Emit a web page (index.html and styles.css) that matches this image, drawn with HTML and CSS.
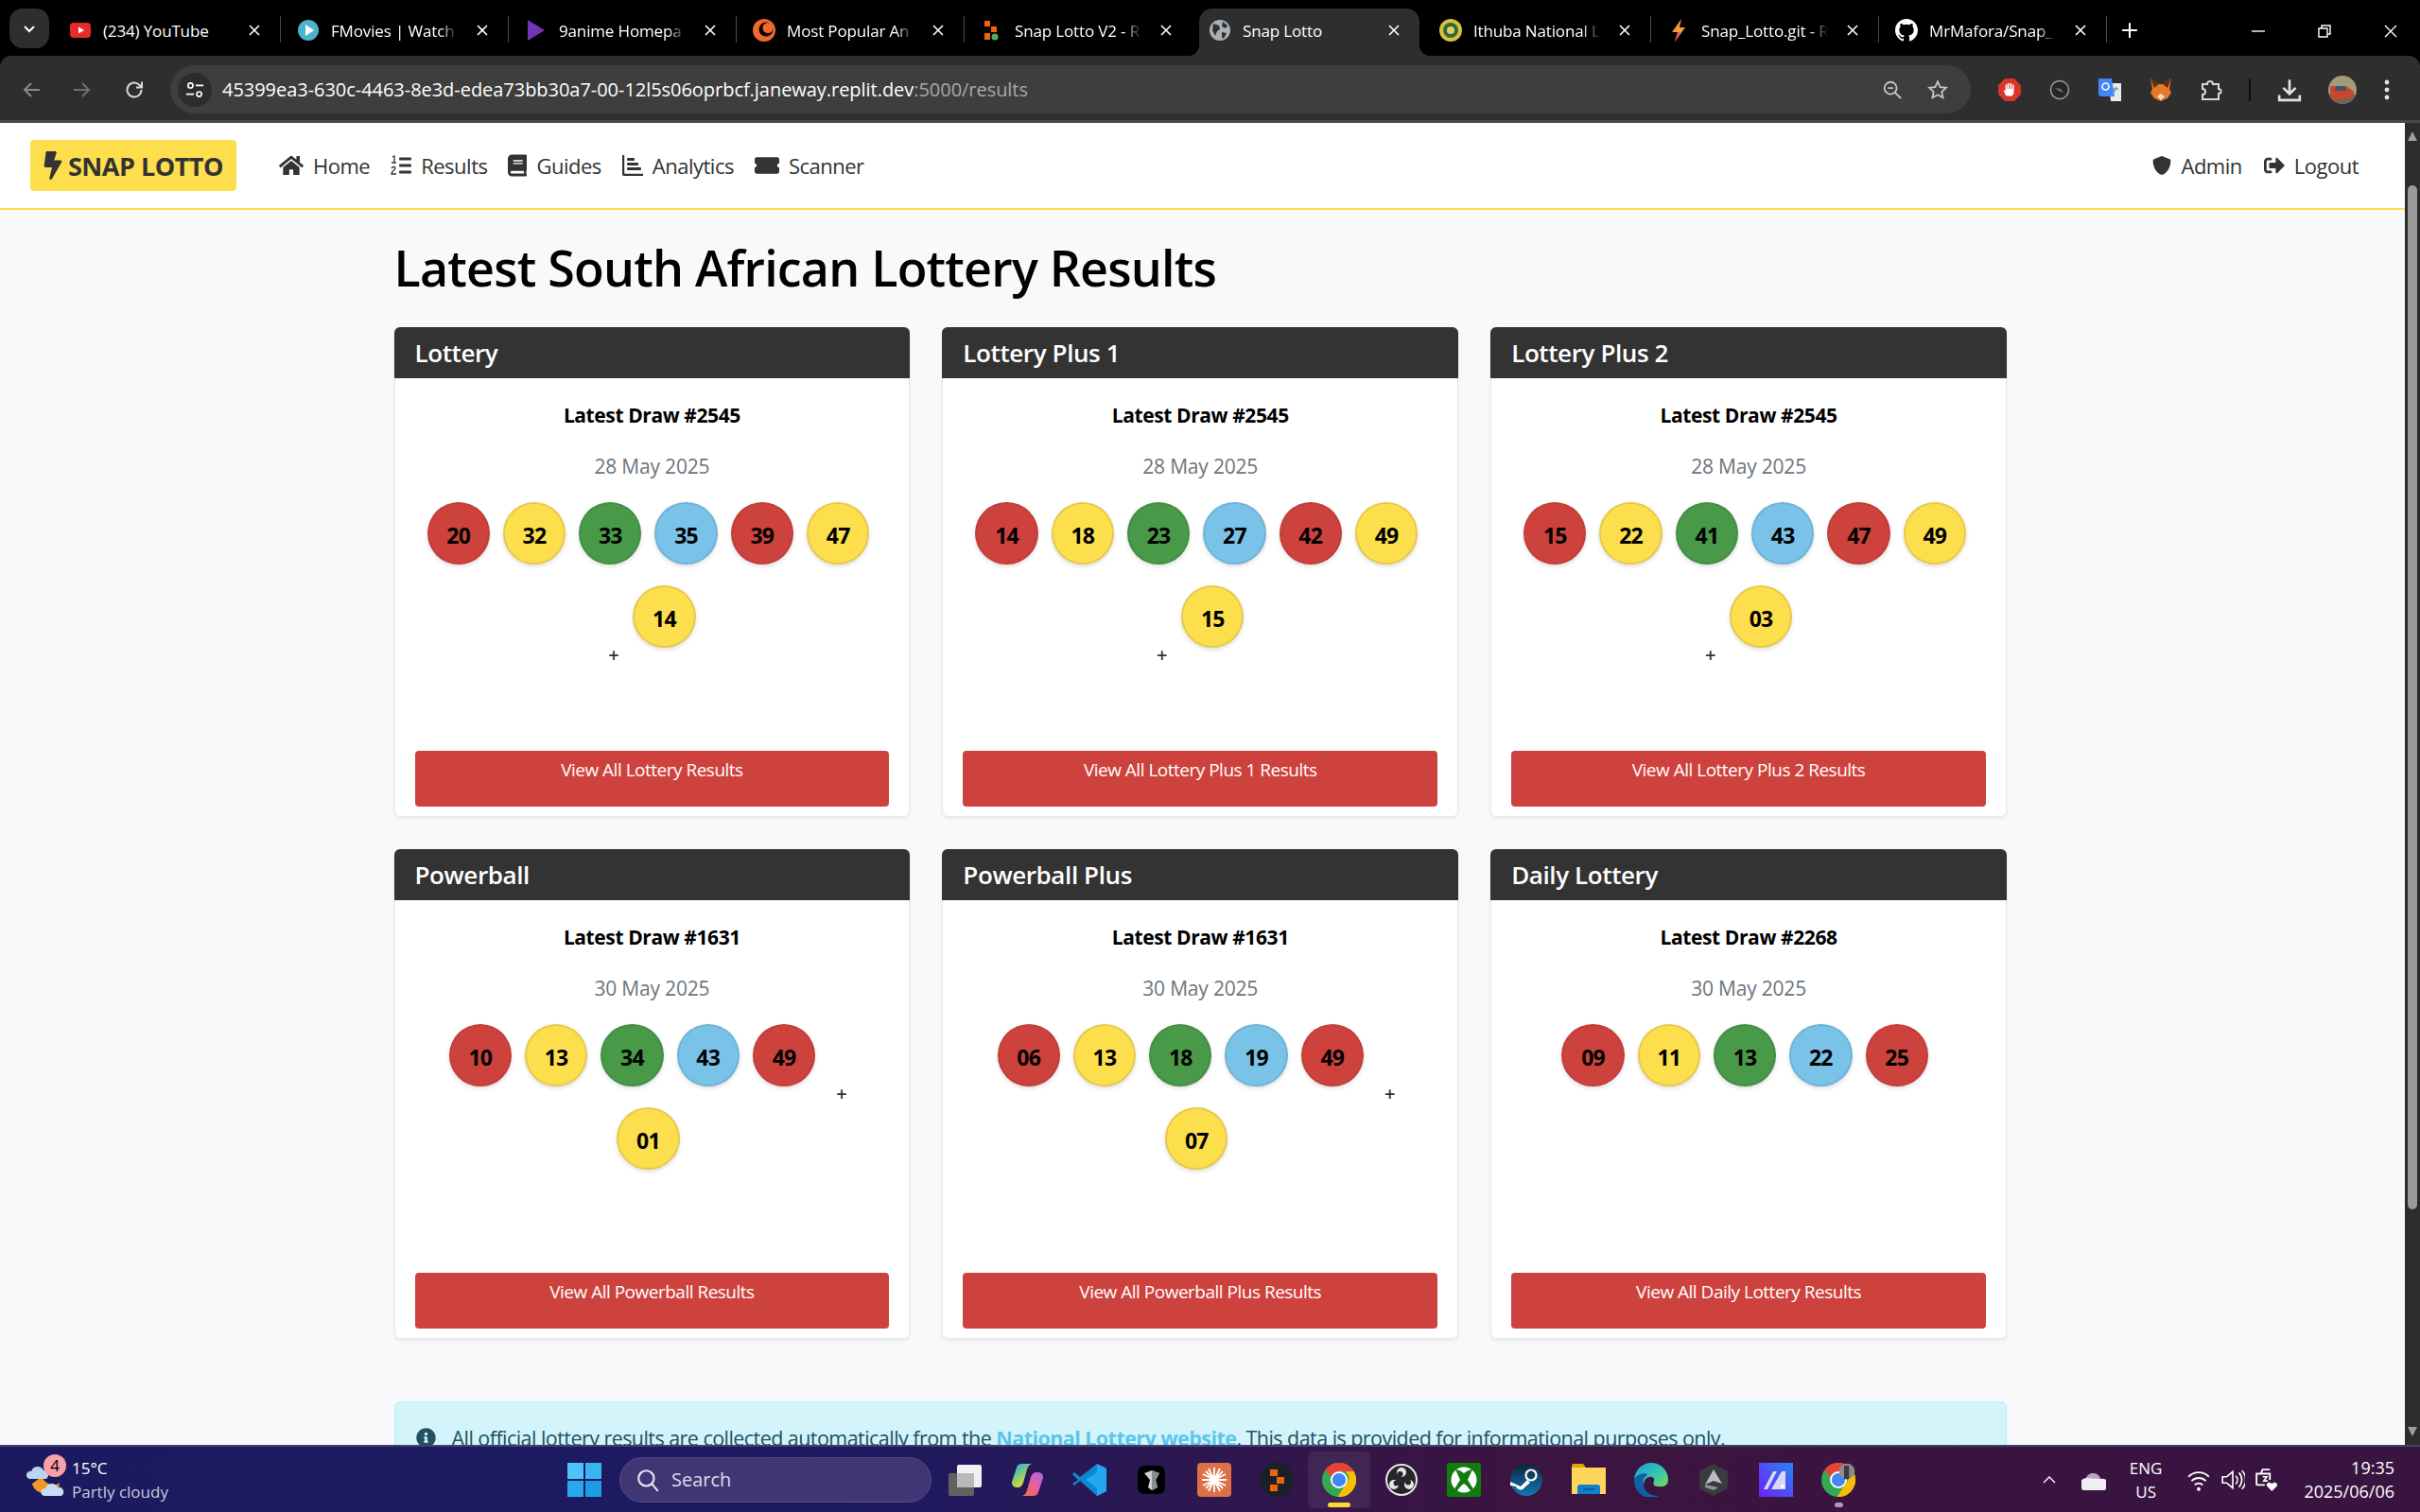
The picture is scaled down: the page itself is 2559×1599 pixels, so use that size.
FILE: index.html
```html
<!DOCTYPE html>
<html lang="en">
<head>
    <meta charset="UTF-8">
    <meta name="viewport" content="width=device-width, initial-scale=1.0">
    <title>Snap Lotto</title>
    <link rel="stylesheet" href="styles.css">
</head>
<body>

<svg class="defs" width="0" height="0">
    <symbol id="chrome" viewBox="0 0 48 48">
        <circle cx="24" cy="24" r="24" fill="#34a853"/>
        <path d="M24 0a24 24 0 0 1 20.800 12H24a12 12 0 0 0-11.200 8L4.600 9.800A24 24 0 0 1 24 0z" fill="#ea4335"/>
        <path d="M44.800 12A24 24 0 0 1 22 47.900L33 31a12 12 0 0 0 0-19z" fill="#fbbc04"/>
        <circle cx="24" cy="24" r="12" fill="#fff"/>
        <circle cx="24" cy="24" r="9.500" fill="#4285f4"/>
    </symbol>
    <symbol id="close" viewBox="0 0 16 16">
        <path d="M3 3l10 10M13 3L3 13" stroke="#fff" stroke-width="1.600" fill="none"/>
    </symbol>
</svg>

<div class="browser">
    <div class="tabstrip">
        <div class="tab-search"><svg viewBox="0 0 16 16" width="16" height="16"><path d="M3 6l5 5 5-5" stroke="#fff" stroke-width="2" fill="none"/></svg></div>
        <div class="tab sep">
            <svg class="favicon" viewBox="0 0 24 24"><rect x="1" y="4" width="22" height="16" rx="4" fill="#e62b2b"/><path d="M10 8.500l6 3.500-6 3.500z" fill="#fff"/></svg>
            <span class="tab-title">(234) YouTube</span>
            <svg class="tab-close"><use href="#close"/></svg>
        </div>
        <div class="tab sep">
            <svg class="favicon" viewBox="0 0 24 24"><circle cx="12" cy="12" r="11" fill="#4bb3cd"/><path d="M9 6l9 6-9 6z" fill="#fff"/></svg>
            <span class="tab-title fade">FMovies | Watch</span>
            <svg class="tab-close"><use href="#close"/></svg>
        </div>
        <div class="tab sep">
            <svg class="favicon" viewBox="0 0 24 24"><path d="M3 1l18 11L3 23z" fill="#7136b5"/></svg>
            <span class="tab-title fade">9anime Homepa</span>
            <svg class="tab-close"><use href="#close"/></svg>
        </div>
        <div class="tab sep">
            <svg class="favicon" viewBox="0 0 24 24"><circle cx="12" cy="12" r="12" fill="#f0682a"/><circle cx="14" cy="11" r="7.500" fill="#000"/><circle cx="16" cy="9.500" r="5.500" fill="#f0682a"/></svg>
            <span class="tab-title fade">Most Popular An</span>
            <svg class="tab-close"><use href="#close"/></svg>
        </div>
        <div class="tab">
            <svg class="favicon" viewBox="0 0 24 24"><rect x="4" y="2" width="6" height="6" fill="#f26207"/><rect x="11" y="8" width="6" height="6" fill="#f26207"/><rect x="4" y="15" width="6" height="7" fill="#f26207"/><circle cx="15" cy="19" r="3.500" fill="#57ab5a"/></svg>
            <span class="tab-title fade">Snap Lotto V2 - R</span>
            <svg class="tab-close"><use href="#close"/></svg>
        </div>
        <div class="tab active">
            <svg class="favicon" viewBox="0 0 24 24"><circle cx="12" cy="12" r="11" fill="#aab0b5"/><path d="M5 5l6 2 1 4-3 2-2 5-3-6zM15 3l5 4-2 3-4-2zM14 14l5 1-3 6-2-2z" fill="#2f2f2f"/></svg>
            <span class="tab-title">Snap Lotto</span>
            <svg class="tab-close"><use href="#close"/></svg>
        </div>
        <div class="tab sep">
            <svg class="favicon" viewBox="0 0 24 24"><circle cx="12" cy="12" r="12" fill="#d8c13c"/><circle cx="12" cy="12" r="8" fill="#2f6a3c"/><circle cx="12" cy="12" r="4" fill="#e3d25a"/></svg>
            <span class="tab-title fade">Ithuba National L</span>
            <svg class="tab-close"><use href="#close"/></svg>
        </div>
        <div class="tab sep">
            <svg class="favicon" viewBox="0 0 24 24"><path d="M15 0L5 14h6l-3 10 11-15h-6z" fill="#f59a3a"/><path d="M11 14l-3 10 7-9z" fill="#e8505b"/></svg>
            <span class="tab-title fade">Snap_Lotto.git - R</span>
            <svg class="tab-close"><use href="#close"/></svg>
        </div>
        <div class="tab sep">
            <svg class="favicon" viewBox="0 0 16 16"><path fill="#fff" d="M8 0C3.580 0 0 3.580 0 8c0 3.540 2.290 6.530 5.470 7.590.4.070.55-.17.55-.38v-1.340c-2.230.48-2.700-1.070-2.700-1.070-.36-.92-.89-1.170-.89-1.170-.73-.5.050-.49.050-.49.800.060 1.230.83 1.230.83.720 1.220 1.870.87 2.330.66.070-.52.280-.87.510-1.070-1.780-.2-3.640-.89-3.640-3.950 0-.87.310-1.590.82-2.150-.080-.2-.36-1.020.080-2.120 0 0 .67-.21 2.200.82a7.640 7.640 0 0 1 4 0c1.530-1.040 2.200-.82 2.200-.82.440 1.100.16 1.920.08 2.120.51.560.82 1.270.82 2.150 0 3.070-1.870 3.750-3.650 3.950.29.250.54.730.54 1.480v2.200c0 .210.15.46.55.38A8.010 8.010 0 0 0 16 8c0-4.420-3.580-8-8-8z"/></svg>
            <span class="tab-title fade">MrMafora/Snap_</span>
            <svg class="tab-close"><use href="#close"/></svg>
        </div>
        <div class="new-tab"><svg viewBox="0 0 16 16" width="18" height="18"><path d="M8 1v14M1 8h14" stroke="#fff" stroke-width="1.800"/></svg></div>
        <div class="window-btns">
            <svg viewBox="0 0 16 16" width="16" height="16"><path d="M1 8h14" stroke="#fff" stroke-width="1.400"/></svg>
            <svg viewBox="0 0 16 16" width="16" height="16"><path d="M2 5h9v9H2zM5 5V2h9v9h-3" stroke="#fff" stroke-width="1.400" fill="none"/></svg>
            <svg viewBox="0 0 16 16" width="16" height="16"><path d="M2 2l12 12M14 2L2 14" stroke="#fff" stroke-width="1.400"/></svg>
        </div>
    </div>

    <div class="toolbar">
        <svg class="tool tool-back" viewBox="0 0 24 24"><path d="M20 12H5M11 5l-7 7 7 7" stroke="#8a8a8a" stroke-width="2" fill="none"/></svg>
        <svg class="tool tool-forward" viewBox="0 0 24 24"><path d="M4 12h15M13 5l7 7-7 7" stroke="#6f6f6f" stroke-width="2" fill="none"/></svg>
        <svg class="tool tool-reload" viewBox="0 0 24 24"><path d="M19.500 12a7.500 7.500 0 1 1-2.200-5.300L20 9.500M20 3.500v6h-6" stroke="#d8d8d8" stroke-width="2" fill="none"/></svg>
        <div class="omnibox">
            <div class="site-info"><svg viewBox="0 0 24 24" width="22" height="22"><circle cx="7" cy="7" r="2.800" stroke="#fff" stroke-width="1.800" fill="none"/><path d="M13 7h9M2 17h9" stroke="#fff" stroke-width="1.800"/><circle cx="17" cy="17" r="2.800" stroke="#fff" stroke-width="1.800" fill="none"/></svg></div>
            <span class="url">45399ea3-630c-4463-8e3d-edea73bb30a7-00-12l5s06oprbcf.janeway.replit.dev<span class="url-dim">:5000/results</span></span>
            <svg class="omni-icon" viewBox="0 0 24 24"><circle cx="10" cy="10" r="7" stroke="#c4c7c5" stroke-width="2" fill="none"/><path d="M15 15l7 7M7 10h6" stroke="#c4c7c5" stroke-width="2"/></svg>
            <svg class="omni-icon" viewBox="0 0 24 24"><path d="M12 2.500l2.900 6.300 6.800.8-5 4.700 1.300 6.800-6-3.400-6 3.400 1.300-6.800-5-4.700 6.800-.8z" stroke="#c4c7c5" stroke-width="2" fill="none"/></svg>
        </div>
        <div class="extensions">
            <svg viewBox="0 0 24 24" width="26" height="26"><path d="M7.500 1h9L23 7.500v9L16.500 23h-9L1 16.500v-9z" fill="#d9362b"/><path d="M8 17l-2-5 2 1V7h1.500v4H10V5.500h1.500V11h1V5.500H14V11h.8V7h1.400v8l-1.700 3H9.500z" fill="#fff"/></svg>
            <svg viewBox="0 0 24 24" width="24" height="24"><circle cx="12" cy="12" r="9.500" stroke="#9a9a9a" stroke-width="1.500" fill="#262626"/><path d="M7 10l6 1 3 4-5-2z" fill="#777"/></svg>
            <svg viewBox="0 0 26 26" width="26" height="26"><path d="M12 6h13v19H14z" fill="#e8eaed"/><path d="M1 1h14l3 19H4a3 3 0 0 1-3-3z" fill="#4285f4"/><path d="M20 10l-4 8M16 12h6" stroke="#7a9aa8" stroke-width="1.500"/><circle cx="8.500" cy="9.500" r="3.500" stroke="#fff" stroke-width="1.600" fill="none"/></svg>
            <svg viewBox="0 0 26 26" width="26" height="26"><path d="M2 1l9 6h4l9-6-2 11 2 4-4 6-7 3-7-3-4-6 2-4z" fill="#e8772a"/><path d="M2 1l9 6-5 4zM24 1l-9 6 5 4z" fill="#5d2f12"/><path d="M9 20l4 4 4-4-4-3z" fill="#f5e1d0"/></svg>
            <svg viewBox="0 0 24 24" width="24" height="24"><path d="M3 6h5a3 3 0 0 1 6 0h6v5a2.500 2.500 0 0 1 0 5v6H3v-5a3 3 0 0 0 0-6z" stroke="#d8d8d8" stroke-width="2" fill="none"/></svg>
            <span class="ext-divider"></span>
            <svg viewBox="0 0 24 24" width="26" height="26"><path d="M12 2v13M6 10l6 6 6-6M2 17v5h20v-5" stroke="#e3e3e3" stroke-width="2.400" fill="none"/></svg>
            <svg viewBox="0 0 30 30" width="30" height="30"><defs><clipPath id="avatar"><circle cx="15" cy="15" r="15"/></clipPath></defs><g clip-path="url(#avatar)"><rect width="30" height="30" fill="#a39c78"/><rect y="20" width="30" height="10" fill="#6f6258"/><path d="M2 11h17l8 6v6l-20 3-5-5z" fill="#c9472c"/><path d="M8 11h9l3 5H7z" fill="#44536a"/></g></svg>
            <svg viewBox="0 0 8 24" width="8" height="24"><circle cx="4" cy="4" r="2.400" fill="#e3e3e3"/><circle cx="4" cy="12" r="2.400" fill="#e3e3e3"/><circle cx="4" cy="20" r="2.400" fill="#e3e3e3"/></svg>
        </div>
    </div>
</div>

<div class="viewport">
    <div class="page">
        <nav class="navbar">
            <a class="brand">
                <svg class="brand-bolt" viewBox="0 0 320 512"><path d="M296 160H180.600l42.600-129.800C227.200 15 215.700 0 200 0H56C44 0 33.800 8.900 32.200 20.800l-32 240C-1.700 275.200 9.500 288 24 288h118.700L96.600 482.500c-3.600 15.200 8 29.500 23.300 29.500 8.400 0 16.400-4.400 20.800-12l176-304c9.300-15.900-2.200-36-20.700-36z"/></svg>
                SNAP LOTTO
            </a>
            <ul class="nav-links">
                <li><svg class="nav-icon" viewBox="0 0 576 512"><path d="M280.370 148.260L96 300.110V464a16 16 0 0 0 16 16l112.060-.29a16 16 0 0 0 15.920-16V368a16 16 0 0 1 16-16h64a16 16 0 0 1 16 16v95.640a16 16 0 0 0 16 16.050L464 480a16 16 0 0 0 16-16V300L295.670 148.260a12.190 12.190 0 0 0-15.300 0zM571.600 251.470L488 182.560V44.050a12 12 0 0 0-12-12h-56a12 12 0 0 0-12 12v72.610L318.470 43a48 48 0 0 0-61 0L4.340 251.470a12 12 0 0 0-1.600 16.900l25.500 31A12 12 0 0 0 45.150 301l235.220-193.740a12.190 12.190 0 0 1 15.300 0L530.900 301a12 12 0 0 0 16.900-1.600l25.500-31a12 12 0 0 0-1.700-16.930z"/></svg>Home</li>
                <li><svg class="nav-icon icon-list" viewBox="0 0 22 22"><path d="M2 2l2-1v7M1 8h5" stroke="#333" stroke-width="1.300" fill="none"/><path d="M1 14c1-2 4-2 4 0 0 1.500-4 3-4 6h5" stroke="#333" stroke-width="1.300" fill="none"/><rect x="9" y="2.500" width="13" height="3" rx="1"/><rect x="9" y="9.500" width="13" height="3" rx="1"/><rect x="9" y="16.500" width="13" height="3" rx="1"/></svg>Results</li>
                <li><svg class="nav-icon icon-book" viewBox="0 0 448 512"><path d="M448 360V24c0-13.300-10.700-24-24-24H96C43 0 0 43 0 96v320c0 53 43 96 96 96h328c13.300 0 24-10.700 24-24v-16c0-7.500-3.500-14.300-8.900-18.700-4.200-15.400-4.200-59.300 0-74.700 5.400-4.300 8.900-11.100 8.900-18.600zM128 134c0-3.300 2.700-6 6-6h212c3.300 0 6 2.700 6 6v20c0 3.300-2.700 6-6 6H134c-3.300 0-6-2.700-6-6v-20zm0 64c0-3.300 2.700-6 6-6h212c3.300 0 6 2.700 6 6v20c0 3.300-2.700 6-6 6H134c-3.300 0-6-2.700-6-6v-20zm253.400 250H96c-17.700 0-32-14.300-32-32 0-17.600 14.400-32 32-32h285.400c-1.900 17.100-1.900 46.900 0 64z"/></svg>Guides</li>
                <li><svg class="nav-icon icon-list" viewBox="0 0 22 22"><path d="M1 0v19a2 2 0 0 0 2 2h19" stroke="#333" stroke-width="2.400" fill="none"/><rect x="5" y="3" width="8" height="3" rx="1"/><rect x="5" y="8" width="12" height="3" rx="1"/><rect x="5" y="13" width="15" height="3" rx="1"/></svg>Analytics</li>
                <li><svg class="nav-icon" viewBox="0 0 576 512"><path d="M528 256c0 26.510 21.490 48 48 48v96c0 26.510-21.490 48-48 48H48c-26.510 0-48-21.490-48-48v-96c26.510 0 48-21.490 48-48s-21.490-48-48-48v-96c0-26.510 21.490-48 48-48h480c26.510 0 48 21.490 48 48v96c-26.510 0-48 21.490-48 48z"/></svg>Scanner</li>
            </ul>
            <ul class="nav-links nav-right">
                <li><svg class="nav-icon icon-shield" viewBox="0 0 512 512"><path d="M466.500 83.700l-192-80a48.150 48.150 0 0 0-36.900 0l-192 80C27.700 91.100 16 108.600 16 128c0 198.500 114.500 335.700 221.500 380.300 11.800 4.900 25.100 4.900 36.900 0C360.100 472.600 496 349.300 496 128c0-19.400-11.700-36.900-29.500-44.300z"/></svg>Admin</li>
                <li><svg class="nav-icon icon-logout" viewBox="0 0 512 512"><path d="M497 273L329 441c-15 15-41 4.500-41-17v-96H152c-13.300 0-24-10.700-24-24v-96c0-13.300 10.700-24 24-24h136V88c0-21.400 25.900-32 41-17l168 168c9.300 9.400 9.300 24.600 0 34zM192 436v-40c0-6.600-5.400-12-12-12H96c-17.700 0-32-14.300-32-32V160c0-17.700 14.300-32 32-32h84c6.600 0 12-5.400 12-12V76c0-6.600-5.400-12-12-12H96c-53 0-96 43-96 96v192c0 53 43 96 96 96h84c6.600 0 12-5.400 12-12z"/></svg>Logout</li>
            </ul>
        </nav>

        <main class="container">
            <h1 class="page-title">Latest South African Lottery Results</h1>

            <div class="card-grid">
                <section class="card">
                    <h2 class="card-header">Lottery</h2>
                    <div class="card-body">
                        <h3 class="draw-title">Latest Draw #2545</h3>
                        <p class="draw-date">28 May 2025</p>
                        <div class="balls">
                            <span class="ball red">20</span><span class="ball yellow">32</span><span class="ball green">33</span><span class="ball blue">35</span><span class="ball red">39</span><span class="ball yellow">47</span>
                            <span class="plus">+</span><span class="ball yellow">14</span>
                        </div>
                        <a class="view-all">View All Lottery Results</a>
                    </div>
                </section>
                <section class="card">
                    <h2 class="card-header">Lottery Plus 1</h2>
                    <div class="card-body">
                        <h3 class="draw-title">Latest Draw #2545</h3>
                        <p class="draw-date">28 May 2025</p>
                        <div class="balls">
                            <span class="ball red">14</span><span class="ball yellow">18</span><span class="ball green">23</span><span class="ball blue">27</span><span class="ball red">42</span><span class="ball yellow">49</span>
                            <span class="plus">+</span><span class="ball yellow">15</span>
                        </div>
                        <a class="view-all">View All Lottery Plus 1 Results</a>
                    </div>
                </section>
                <section class="card">
                    <h2 class="card-header">Lottery Plus 2</h2>
                    <div class="card-body">
                        <h3 class="draw-title">Latest Draw #2545</h3>
                        <p class="draw-date">28 May 2025</p>
                        <div class="balls">
                            <span class="ball red">15</span><span class="ball yellow">22</span><span class="ball green">41</span><span class="ball blue">43</span><span class="ball red">47</span><span class="ball yellow">49</span>
                            <span class="plus">+</span><span class="ball yellow">03</span>
                        </div>
                        <a class="view-all">View All Lottery Plus 2 Results</a>
                    </div>
                </section>
                <section class="card">
                    <h2 class="card-header">Powerball</h2>
                    <div class="card-body">
                        <h3 class="draw-title">Latest Draw #1631</h3>
                        <p class="draw-date">30 May 2025</p>
                        <div class="balls">
                            <span class="ball red">10</span><span class="ball yellow">13</span><span class="ball green">34</span><span class="ball blue">43</span><span class="ball red">49</span>
                            <span class="plus">+</span><span class="ball yellow">01</span>
                        </div>
                        <a class="view-all">View All Powerball Results</a>
                    </div>
                </section>
                <section class="card">
                    <h2 class="card-header">Powerball Plus</h2>
                    <div class="card-body">
                        <h3 class="draw-title">Latest Draw #1631</h3>
                        <p class="draw-date">30 May 2025</p>
                        <div class="balls">
                            <span class="ball red">06</span><span class="ball yellow">13</span><span class="ball green">18</span><span class="ball blue">19</span><span class="ball red">49</span>
                            <span class="plus">+</span><span class="ball yellow">07</span>
                        </div>
                        <a class="view-all">View All Powerball Plus Results</a>
                    </div>
                </section>
                <section class="card">
                    <h2 class="card-header">Daily Lottery</h2>
                    <div class="card-body">
                        <h3 class="draw-title">Latest Draw #2268</h3>
                        <p class="draw-date">30 May 2025</p>
                        <div class="balls">
                            <span class="ball red">09</span><span class="ball yellow">11</span><span class="ball green">13</span><span class="ball blue">22</span><span class="ball red">25</span>
                        </div>
                        <a class="view-all">View All Daily Lottery Results</a>
                    </div>
                </section>
            </div>

            <div class="alert-info">
                <svg class="alert-icon" viewBox="0 0 512 512"><path d="M256 8C119.043 8 8 119.083 8 256c0 136.997 111.043 248 248 248s248-111.003 248-248C504 119.083 392.957 8 256 8zm0 110c23.196 0 42 18.804 42 42s-18.804 42-42 42-42-18.804-42-42 18.804-42 42-42zm56 254c0 6.627-5.373 12-12 12h-88c-6.627 0-12-5.373-12-12v-24c0-6.627 5.373-12 12-12h12v-64h-12c-6.627 0-12-5.373-12-12v-24c0-6.627 5.373-12 12-12h64c6.627 0 12 5.373 12 12v100h12c6.627 0 12 5.373 12 12v24z"/></svg>
                <span>All official lottery results are collected automatically from the <a class="alert-link">National Lottery website</a>. This data is provided for informational purposes only.</span>
            </div>
        </main>
    </div>

    <div class="scrollbar">
        <svg viewBox="0 0 12 12" width="12" height="12"><path d="M6 1l5 10H1z" fill="#9e9e9e"/></svg>
        <div class="scroll-thumb"></div>
        <svg viewBox="0 0 12 12" width="12" height="12"><path d="M1 1h10L6 11z" fill="#9e9e9e"/></svg>
    </div>
</div>

<footer class="taskbar">
    <div class="weather">
        <div class="weather-icon">
            <svg viewBox="0 0 40 40" width="40" height="40">
                <path d="M6 24c2 9 12 13 24 8 3-2 5-5 5-9-3 3-8 3-12 1-4-2-6-5-6-8z" fill="#f29a1f"/>
                <path d="M3 19a4 4 0 0 1 2-8 7 7 0 0 1 13-1 5 5 0 0 1 3 9z" fill="#b9d3f0"/>
                <path d="M19 37a4 4 0 0 1 1-8 7 7 0 0 1 13-1 5 5 0 0 1 4 9z" fill="#c8dcf5"/>
            </svg>
            <span class="weather-badge">4</span>
        </div>
        <div class="weather-text">
            <span>15°C</span>
            <span class="weather-desc">Partly cloudy</span>
        </div>
    </div>

    <div class="task-center">
        <svg class="win-logo" viewBox="0 0 36 36"><rect width="17" height="17" fill="#4fc3f7"/><rect x="19" width="17" height="17" fill="#39b5f2"/><rect y="19" width="17" height="17" fill="#29a8ec"/><rect x="19" y="19" width="17" height="17" fill="#1e9ae6"/></svg>
        <div class="search-box">
            <svg viewBox="0 0 24 24" width="26" height="26"><circle cx="10.500" cy="10.500" r="7.500" stroke="#e6e4f0" stroke-width="2" fill="none"/><path d="M16 16l6 7" stroke="#e6e4f0" stroke-width="2"/></svg>
            <span>Search</span>
        </div>
        <div class="task-icons">
            <div class="task-icon"><svg viewBox="0 0 36 36"><rect x="1" y="11" width="27" height="24" rx="2" fill="#616161"/><rect x="10" y="2" width="26" height="24" rx="2" fill="#f1f1f1"/><rect x="10" y="11" width="18" height="15" fill="#b9b9b9"/></svg></div>
            <div class="task-icon"><svg viewBox="0 0 36 36"><defs><linearGradient id="copilot-a" x1="0" y1="0" x2="0.600" y2="1"><stop offset="0" stop-color="#1fa6ee"/><stop offset=".6" stop-color="#8fd06a"/><stop offset="1" stop-color="#f7d93a"/></linearGradient><linearGradient id="copilot-b" x1="0" y1="1" x2="1" y2="0"><stop offset="0" stop-color="#f5702c"/><stop offset=".5" stop-color="#e85fa0"/><stop offset="1" stop-color="#a566e8"/></linearGradient></defs><path d="M12 1h11c-3 1-4 3-5 6l-4 14c-1 3-3 5-6 5H7a5 5 0 0 1-5-6L7 5c1-3 3-4 5-4z" fill="url(#copilot-a)"/><path d="M24 35H13c3-1 4-3 5-6l4-14c1-3 3-5 6-5h2a5 5 0 0 1 5 6l-5 15c-1 3-3 4-6 4z" fill="url(#copilot-b)"/></svg></div>
            <div class="task-icon"><svg viewBox="0 0 36 36"><path d="M26 1l10 5v24l-10 5L8 19 2 24l-2-2 6-4-6-6 2-2 6 5z" fill="#0e87d2"/><path d="M26 1l10 5v24l-10 5V10L14 18l12 9z" fill="#23a7f0"/></svg></div>
            <div class="task-icon"><svg viewBox="0 0 36 36"><rect x="3" y="3" width="29" height="30" rx="7" fill="#000"/><path d="M10 11l8-3 8 3-4 7 2 8-6 3-4-3 2-8z" fill="#cfcfcf"/><path d="M18 8l8 3-4 7 2 8-6 3z" fill="#8c8c8c"/></svg></div>
            <div class="task-icon"><svg viewBox="0 0 36 36"><rect width="36" height="36" rx="4" fill="#dc7048"/><path d="M18 5v26M5 18h26M9 9l18 18M27 9L9 27M12 6l12 24M24 6L12 30M6 12l24 12M30 12L6 24" stroke="#fff" stroke-width="1.800"/></svg></div>
            <div class="task-icon"><svg viewBox="0 0 36 36"><circle cx="18" cy="18" r="18" fill="#1a2029"/><rect x="11" y="7" width="8" height="7" fill="#f26207"/><rect x="18" y="15" width="8" height="7" fill="#f26207"/><rect x="11" y="23" width="8" height="7" fill="#f26207"/></svg></div>
            <div class="task-icon task-active"><svg viewBox="0 0 48 48"><use href="#chrome"/></svg><span class="task-dot"></span></div>
            <div class="task-icon"><svg viewBox="0 0 36 36"><circle cx="18" cy="18" r="16" fill="#26262a" stroke="#e6e6e6" stroke-width="2"/><g fill="#e6e6e6"><circle cx="18" cy="10" r="5"/><circle cx="10" cy="23" r="5"/><circle cx="26" cy="23" r="5"/></g><g fill="#26262a"><circle cx="16.500" cy="12" r="3"/><circle cx="12.500" cy="21.500" r="3"/><circle cx="25" cy="20.500" r="3"/></g></svg></div>
            <div class="task-icon"><svg viewBox="0 0 36 36"><rect width="36" height="36" rx="3" fill="#107c10"/><circle cx="18" cy="18" r="13.500" fill="#fff"/><path d="M18 11c4-3 7-4 9-4l-5 11 8 13h-4c-3-5-6-8-8-9-2 1-5 4-8 9H6l8-13L9 7c2 0 5 1 9 4z" fill="#107c10"/></svg></div>
            <div class="task-icon"><svg viewBox="0 0 36 36"><defs><linearGradient id="steam" x1="0" y1="0" x2="0" y2="1"><stop offset="0" stop-color="#10213f"/><stop offset="1" stop-color="#1278b0"/></linearGradient></defs><circle cx="18" cy="18" r="17" fill="url(#steam)"/><circle cx="23" cy="13" r="5.500" stroke="#fff" stroke-width="2.200" fill="none"/><path d="M1 20l11 5 7-7 3 3-8 7a5 5 0 0 1-7-3L1 24z" fill="#fff"/></svg></div>
            <div class="task-icon"><svg viewBox="0 0 36 36"><path d="M0 3a2 2 0 0 1 2-2h10l3 4H0z" fill="#dea600"/><path d="M0 5h36v28H0z" fill="#fdd55a"/><path d="M6 25a3 3 0 0 1 3-2h18a3 3 0 0 1 3 2v8H6z" fill="#0f80cc"/><rect x="12" y="27" width="12" height="2" fill="#0a5d99"/></svg></div>
            <div class="task-icon"><svg viewBox="0 0 36 36"><defs><linearGradient id="edge" x1="0" y1="0" x2="1" y2="1"><stop offset="0" stop-color="#1d9ad9"/><stop offset=".55" stop-color="#35c7b0"/><stop offset="1" stop-color="#7bdc4c"/></linearGradient></defs><path d="M18 0a18 18 0 0 1 18 18c0 6-5 8-10 7-4 0-7-1-5-6 1-3-2-5-5-4-5 1-7 7-6 11C5 22 0 22 0 17 1 7 9 0 18 0z" fill="url(#edge)"/><path d="M0 17c3-5 11-8 15-4-5 1-7 7-4 14 2 5 8 8 15 8l2-1a18 18 0 0 1-28-17z" fill="#0f5fa8"/></svg></div>
            <div class="task-icon"><svg viewBox="0 0 36 36"><path d="M18 1l15 8v18l-15 8-15-8V9z" fill="#3a3a3f"/><path d="M18 7l9 15-9-3-9 4z" fill="#b9bcc0"/><path d="M9 23l14 3-5 3-9-3z" fill="#8e9196"/></svg></div>
            <div class="task-icon"><svg viewBox="0 0 36 36"><defs><linearGradient id="cursor-app" x1="0" y1="1" x2="1" y2="0"><stop offset="0" stop-color="#6b21f5"/><stop offset="1" stop-color="#2b82f6"/></linearGradient></defs><rect width="36" height="36" fill="url(#cursor-app)"/><path d="M5 28L15 9h4L9 28zM13 28L24 9h4v19h-4z" fill="#d8d8f6"/><circle cx="25" cy="25" r="2" fill="#fff"/></svg></div>
            <div class="task-icon task-open"><svg viewBox="0 0 48 48"><use href="#chrome"/><circle cx="36" cy="12" r="11" fill="#8b8b8b"/><rect x="32" y="4" width="7" height="19" fill="#3e3b39"/></svg><span class="task-dot"></span></div>
        </div>
    </div>

    <div class="tray">
        <svg viewBox="0 0 16 16" width="16" height="16"><path d="M2 11l6-6 6 6" stroke="#fff" stroke-width="1.400" fill="none"/></svg>
        <svg class="tray-cloud" viewBox="0 0 26 26" width="26" height="26"><path d="M2 24a7 7 0 0 1 3-13 8 8 0 0 1 15 1 6 6 0 0 1 4 12z" fill="#f1eef3"/><path d="M5 11a8 8 0 0 1 15 1z" fill="#b8a6c0"/></svg>
        <div class="tray-lang"><span>ENG</span><span>US</span></div>
        <div class="tray-icons">
            <svg viewBox="0 0 24 24" width="26" height="26"><path d="M2 9a14 14 0 0 1 20 0M5 13a10 10 0 0 1 14 0M8 17a6 6 0 0 1 8 0" stroke="#fff" stroke-width="1.700" fill="none"/><circle cx="12" cy="21" r="1.800" fill="#fff"/></svg>
            <svg viewBox="0 0 24 24" width="26" height="26"><path d="M2 9h4l6-5v16l-6-5H2zM15 8a6 6 0 0 1 0 8M18 5a10 10 0 0 1 0 14M21 3a13 13 0 0 1 0 18" stroke="#fff" stroke-width="1.500" fill="none"/></svg>
            <svg viewBox="0 0 24 24" width="26" height="26"><path d="M2 17V6h13v6M6 6l2-4h7M2 17h8" stroke="#fff" stroke-width="1.700" fill="none"/><path d="M8 9h4l-3 4h4" stroke="#fff" stroke-width="1.500" fill="none"/><path d="M17 23l-5-5c-1-3 3-5 5-2 2-3 6-1 5 2z" fill="#fff"/></svg>
        </div>
        <div class="clock"><span>19:35</span><span>2025/06/06</span></div>
    </div>
</footer>

</body>
</html>
```

FILE: styles.css
```css
* {
    box-sizing: border-box;
}

html, body {
    height: 100%;
}

body {
    margin: 0;
    display: flex;
    flex-direction: column;
    overflow: hidden;
    font-family: "Open Sans", "Noto Sans", sans-serif;
    background-color: #f8f9fa;
    color: #333;
}

.defs {
    position: absolute;
}

/* browser window */

.browser {
    background-color: #000;
}

.tabstrip {
    display: flex;
    align-items: flex-end;
    height: 59px;
    color: #fff;
    font-size: 17px;
}

.tab-search {
    display: flex;
    align-items: center;
    justify-content: center;
    width: 42px;
    height: 42px;
    margin: 0 4px 8px 10px;
    border-radius: 14px;
    background-color: #2e2e2e;
}

.tab {
    display: flex;
    align-items: center;
    position: relative;
    width: 241px;
    height: 50px;
    padding: 0 14px 4px 17px;
    border-radius: 14px 14px 0 0;
}

.tab.sep::after {
    content: "";
    position: absolute;
    right: 0;
    top: 8px;
    height: 28px;
    border-right: 1px solid #4c4c4c;
}

.tab.active {
    width: 233px;
    margin: 0 4px 0 7px;
    padding-left: 10px;
    padding-right: 6px;
    background-color: #2e2e2e;
}

.tab.active::before,
.tab.active::after {
    content: "";
    position: absolute;
    bottom: 0;
    width: 12px;
    height: 12px;
}

.tab.active::before {
    left: -12px;
    background: radial-gradient(circle at 0 0, transparent 12px, #2e2e2e 12.500px);
}

.tab.active::after {
    right: -12px;
    background: radial-gradient(circle at 100% 0, transparent 12px, #2e2e2e 12.500px);
}

.favicon {
    flex: none;
    width: 24px;
    height: 24px;
    margin-right: 12px;
}

.tab-title {
    width: 134px;
    white-space: nowrap;
    letter-spacing: -0.15px;
}

.tab-title.fade {
    -webkit-mask-image: linear-gradient(90deg, #000 86%, transparent);
    mask-image: linear-gradient(90deg, #000 86%, transparent);
}

.tab-close {
    flex: none;
    width: 16px;
    height: 16px;
    margin-left: 18px;
}

.new-tab {
    display: flex;
    align-items: center;
    margin: 0 0 18px 15px;
}

.window-btns {
    display: flex;
    gap: 54px;
    margin: 0 0 18px auto;
    padding-right: 23px;
}

.toolbar {
    display: flex;
    align-items: center;
    height: 71px;
    padding: 3px 0 0 20px;
    border-radius: 12px 12px 0 0;
    background-color: #2e2e2e;
    border-bottom: 3px solid #4a4a4a;
}

.tool {
    flex: none;
    width: 24px;
    height: 24px;
}

.tool-back {
    margin-left: 2px;
    margin-right: 28px;
}

.tool-forward {
    margin-right: 32px;
}

.tool-reload {
    margin-right: 26px;
}

.omnibox {
    display: flex;
    align-items: center;
    width: 1904px;
    height: 51px;
    padding: 0 24px 0 8px;
    border-radius: 26px;
    background-color: #3e3e3e;
    color: #fff;
    font-size: 20px;
}

.site-info {
    display: flex;
    align-items: center;
    justify-content: center;
    width: 36px;
    height: 36px;
    margin-right: 11px;
    border-radius: 50%;
    background-color: #2c2c2c;
}

.url {
    letter-spacing: -0.04px;
    white-space: nowrap;
}

.url-dim {
    color: #a8a8a8;
}

.omni-icon {
    width: 22px;
    height: 22px;
    margin-left: 26px;
}

.omni-icon:first-of-type {
    margin-left: auto;
}

.extensions {
    display: flex;
    align-items: center;
    gap: 28px;
    margin-left: 28px;
}

.ext-divider {
    width: 2px;
    height: 24px;
    background-color: #0c0c0c;
}

/* page */

.viewport {
    flex: 1;
    display: flex;
    min-height: 0;
}

.page {
    flex: 1;
    min-width: 0;
    overflow: hidden;
}

.scrollbar {
    flex: none;
    display: flex;
    flex-direction: column;
    align-items: center;
    justify-content: space-between;
    width: 16px;
    padding: 8px 0;
    background-color: #2c2c2c;
}

.scroll-thumb {
    width: 10px;
    height: 1083px;
    margin-top: 46px;
    margin-bottom: auto;
    border-radius: 5px;
    background-color: #9b9b9b;
}

.navbar {
    display: flex;
    align-items: center;
    height: 92px;
    padding: 0 49px 0 32px;
    background-color: #fff;
    border-bottom: 2px solid #fddf4e;
}

.brand {
    display: flex;
    align-items: center;
    gap: 6px;
    width: 218px;
    height: 54px;
    padding: 0 0 0 14px;
    margin-right: 45px;
    border-radius: 4px;
    background-color: #fddf4e;
    font-size: 27px;
    font-weight: 700;
    letter-spacing: -0.5px;
    white-space: nowrap;
}

.brand-bolt {
    width: 20px;
    height: 30px;
    fill: #333;
}

.nav-links {
    display: flex;
    gap: 22px;
    margin: 0;
    padding: 0;
    list-style: none;
    font-size: 22px;
    letter-spacing: -0.5px;
}

.nav-links li {
    display: flex;
    align-items: center;
}

.nav-right {
    margin-left: auto;
    gap: 23px;
}

.nav-icon {
    width: 26px;
    height: 24px;
    margin-right: 10px;
    fill: #333;
}

.icon-list {
    width: 22px;
    height: 22px;
}

.icon-book {
    width: 20px;
}

.icon-shield {
    width: 20px;
}

.icon-logout {
    width: 22px;
}

.container {
    width: 1705.500px;
    margin-left: 416.500px;
}

.page-title {
    margin: 0;
    padding: 22px 0 25px;
    font-size: 52px;
    line-height: 77px;
    font-weight: 600;
    color: #000;
    letter-spacing: -0.8px;
}

.card-grid {
    display: grid;
    grid-template-columns: repeat(3, 1fr);
    grid-auto-rows: 518px;
    gap: 34px;
}

.card {
    display: flex;
    flex-direction: column;
    background-color: #fff;
    border: 1px solid #e6e7e9;
    border-radius: 6px;
    box-shadow: 0 2px 4px rgba(0, 0, 0, 0.06);
}

.card-header {
    margin: -1px -1px 0;
    height: 54px;
    padding: 0 22px;
    border-radius: 6px 6px 0 0;
    background-color: #333;
    color: #fff;
    font-size: 26px;
    font-weight: 600;
    line-height: 54px;
    letter-spacing: -0.4px;
}

.card-body {
    flex: 1;
    display: flex;
    flex-direction: column;
    padding: 25px 21px 10px;
}

.draw-title {
    margin: 0;
    text-align: center;
    color: #000;
    font-size: 21px;
    font-weight: 700;
    line-height: 28px;
    letter-spacing: -0.4px;
}

.draw-date {
    margin: 26px 0 0;
    text-align: center;
    color: #6c757d;
    font-size: 21px;
    line-height: 28px;
    letter-spacing: -0.2px;
}

.balls {
    display: flex;
    flex-wrap: wrap;
    justify-content: center;
    align-items: flex-start;
    margin-top: 13px;
    padding-right: 8px;
}

.ball {
    display: flex;
    align-items: center;
    justify-content: center;
    width: 66.300px;
    height: 66px;
    margin: 11px 7px;
    padding-top: 3px;
    border-radius: 50%;
    border: 2px solid;
    color: #000;
    font-size: 23px;
    font-weight: 700;
    letter-spacing: -0.8px;
    box-shadow: 0 2px 4px rgba(0, 0, 0, 0.14);
}

.red {
    background-color: #ce423d;
    border-color: #c23e39;
}

.yellow {
    background-color: #fddf4e;
    border-color: #e8c94a;
}

.green {
    background-color: #499a48;
    border-color: #438e44;
}

.blue {
    background-color: #7ac3e8;
    border-color: #6fb3d6;
}

.plus {
    width: 34px;
    height: 14px;
    margin: 78px 0 -4px;
    padding-left: 15px;
    font-size: 20px;
    font-weight: 600;
    line-height: 14px;
}

.view-all {
    height: 59px;
    margin-top: auto;
    padding-top: 7px;
    border-radius: 4px;
    background-color: #ce423d;
    color: #fff;
    text-align: center;
    font-size: 19px;
    line-height: 26px;
    letter-spacing: -0.5px;
}

.alert-info {
    display: flex;
    align-items: center;
    gap: 17px;
    margin-top: 66px;
    padding: 23px 22px;
    border: 1px solid #b6effb;
    border-radius: 6px;
    background-color: #d3f4fb;
    color: #21525f;
    font-size: 21.500px;
    letter-spacing: -0.55px;
}

.alert-icon {
    flex: none;
    width: 21px;
    height: 21px;
    fill: #21525f;
}

.alert-link {
    color: #5bc6ea;
    font-weight: 700;
}

/* windows taskbar */

.taskbar {
    flex: none;
    display: flex;
    align-items: center;
    position: relative;
    height: 71px;
    background: linear-gradient(90deg, #1b1a5f 0%, #1d1a62 35%, #3b1440 62%, #3a1440 100%);
    border-top: 2px solid #42406a;
    color: #fff;
}

.weather {
    display: flex;
    align-items: center;
    padding-left: 28px;
}

.weather-icon {
    position: relative;
    width: 40px;
    height: 40px;
    margin-right: 8px;
}

.weather-badge {
    position: absolute;
    top: -7px;
    left: 18px;
    width: 24px;
    height: 24px;
    border-radius: 50%;
    background-color: #f9a0a8;
    color: #000;
    text-align: center;
    font-size: 17px;
    line-height: 24px;
}

.weather-text {
    display: flex;
    flex-direction: column;
    font-size: 17px;
    line-height: 25px;
}

.weather-desc {
    color: #c9c8dc;
}

.task-center {
    display: flex;
    align-items: center;
    position: absolute;
    left: 600px;
    top: 0;
    bottom: 0;
}

.win-logo {
    width: 36px;
    height: 36px;
    margin-right: 19px;
}

.search-box {
    display: flex;
    align-items: center;
    gap: 12px;
    width: 330px;
    height: 48px;
    padding-left: 16px;
    border-radius: 24px;
    background-color: #413674;
    border: 1px solid #544a83;
    color: #dcdaea;
    font-size: 20px;
}

.task-icons {
    display: flex;
    margin-left: 2px;
}

.task-icon {
    display: flex;
    align-items: center;
    justify-content: center;
    position: relative;
    width: 66px;
    height: 60px;
    border-radius: 6px;
}

.task-icon svg {
    width: 36px;
    height: 36px;
}

.task-active {
    background-color: rgba(255, 255, 255, 0.07);
}

.task-dot {
    position: absolute;
    bottom: 1px;
    left: 50%;
    width: 24px;
    height: 5px;
    margin-left: -12px;
    border-radius: 3px;
    background-color: #fdd835;
}

.task-open .task-dot {
    width: 9px;
    margin-left: -4px;
    background-color: #a89fb0;
}

.tray {
    display: flex;
    align-items: center;
    margin-left: auto;
    padding-right: 27px;
    font-size: 17px;
}

.tray-cloud {
    margin-left: 26px;
}

.tray-lang {
    display: flex;
    flex-direction: column;
    align-items: center;
    margin-left: 25px;
    line-height: 25px;
}

.tray-icons {
    display: flex;
    gap: 10px;
    margin-left: 26px;
    margin-right: 26px;
}

.clock {
    display: flex;
    flex-direction: column;
    align-items: flex-end;
    font-size: 18px;
    line-height: 25px;
}
```
